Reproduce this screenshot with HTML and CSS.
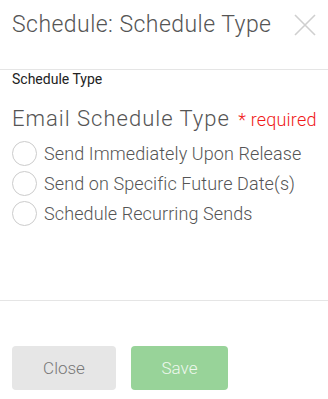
FILE: index.html
```html
<!DOCTYPE html>
<html lang="en">
<head>
    <meta charset="utf-8">
    <title>Schedule</title>
    <link rel="stylesheet" href="styles.css">
</head>
<body>
    <div class="modal">
        <header class="modal-header">
            <h1>Schedule: Schedule Type</h1>
            <span class="close-x">
                <svg width="22" height="22" viewBox="0 0 22 22"><path d="M1 1 L21 21 M21 1 L1 21" stroke="#cfcfcf" stroke-width="1.6" fill="none"/></svg>
            </span>
        </header>

        <div class="modal-body">
            <div class="section-label">Schedule Type</div>
            <div class="field-title">Email Schedule Type <span class="required">* required</span></div>
            <label class="radio-row"><span class="radio"></span>Send Immediately Upon Release</label>
            <label class="radio-row"><span class="radio"></span>Send on Specific Future Date(s)</label>
            <label class="radio-row"><span class="radio"></span>Schedule Recurring Sends</label>
        </div>

        <footer class="modal-footer">
            <button class="btn btn-close">Close</button>
            <button class="btn btn-save">Save</button>
        </footer>
    </div>
</body>
</html>
```

FILE: styles.css
```css
* { margin: 0; padding: 0; box-sizing: border-box; }
body {
    font-family: Roboto, "Liberation Sans", sans-serif;
    background: #fff;
    width: 328px;
    height: 399px;
    overflow: hidden;
}
.modal {
    display: flex;
    flex-direction: column;
    height: 399px;
}
.modal-header {
    display: flex;
    justify-content: space-between;
    align-items: flex-start;
    height: 70px;
    padding: 10px 12px 0 12px;
    border-bottom: 1px solid #e5e5e5;
}
.modal-header h1 {
    font-size: 23px;
    font-weight: 300;
    letter-spacing: 0.45px;
    color: #555;
    line-height: 30px;
}
.close-x {
    margin-top: 4px;
    display: block;
}
.modal-body {
    padding: 0 12px;
    height: 231px;
    border-bottom: 1px solid #e5e5e5;
}
.section-label {
    font-size: 14px;
    color: #222;
    line-height: 16px;
    margin-top: 1px;
}
.field-title {
    white-space: nowrap;
    font-size: 22px;
    font-weight: 300;
    letter-spacing: 1px;
    color: #555;
    line-height: 28px;
    margin-top: 18px;
}
.required {
    font-size: 18px;
    font-weight: 300;
    letter-spacing: 0.2px;
    color: #f01818;
    margin-left: 2px;
}
.radio-row {
    display: flex;
    align-items: center;
    height: 30px;
    font-size: 18px;
    font-weight: 300;
    letter-spacing: 0.1px;
    color: #555;
}
.radio-row:first-of-type {
    margin-top: 4px;
}
.radio {
    width: 25px;
    height: 25px;
    border: 1px solid #ccc;
    border-radius: 50%;
    margin-right: 7px;
    background: #fff;
}
.modal-footer {
    display: flex;
    gap: 15px;
    padding: 45px 12px 0 12px;
}
.btn {
    height: 44px;
    border: none;
    border-radius: 4px;
    font-family: Roboto, "Liberation Sans", sans-serif;
    font-size: 17px;
    font-weight: 300;
    cursor: pointer;
}
.btn-close {
    width: 104px;
    background: #e6e6e6;
    color: #777;
}
.btn-save {
    width: 97px;
    background: #98d399;
    color: #eef8ee;
}
```
